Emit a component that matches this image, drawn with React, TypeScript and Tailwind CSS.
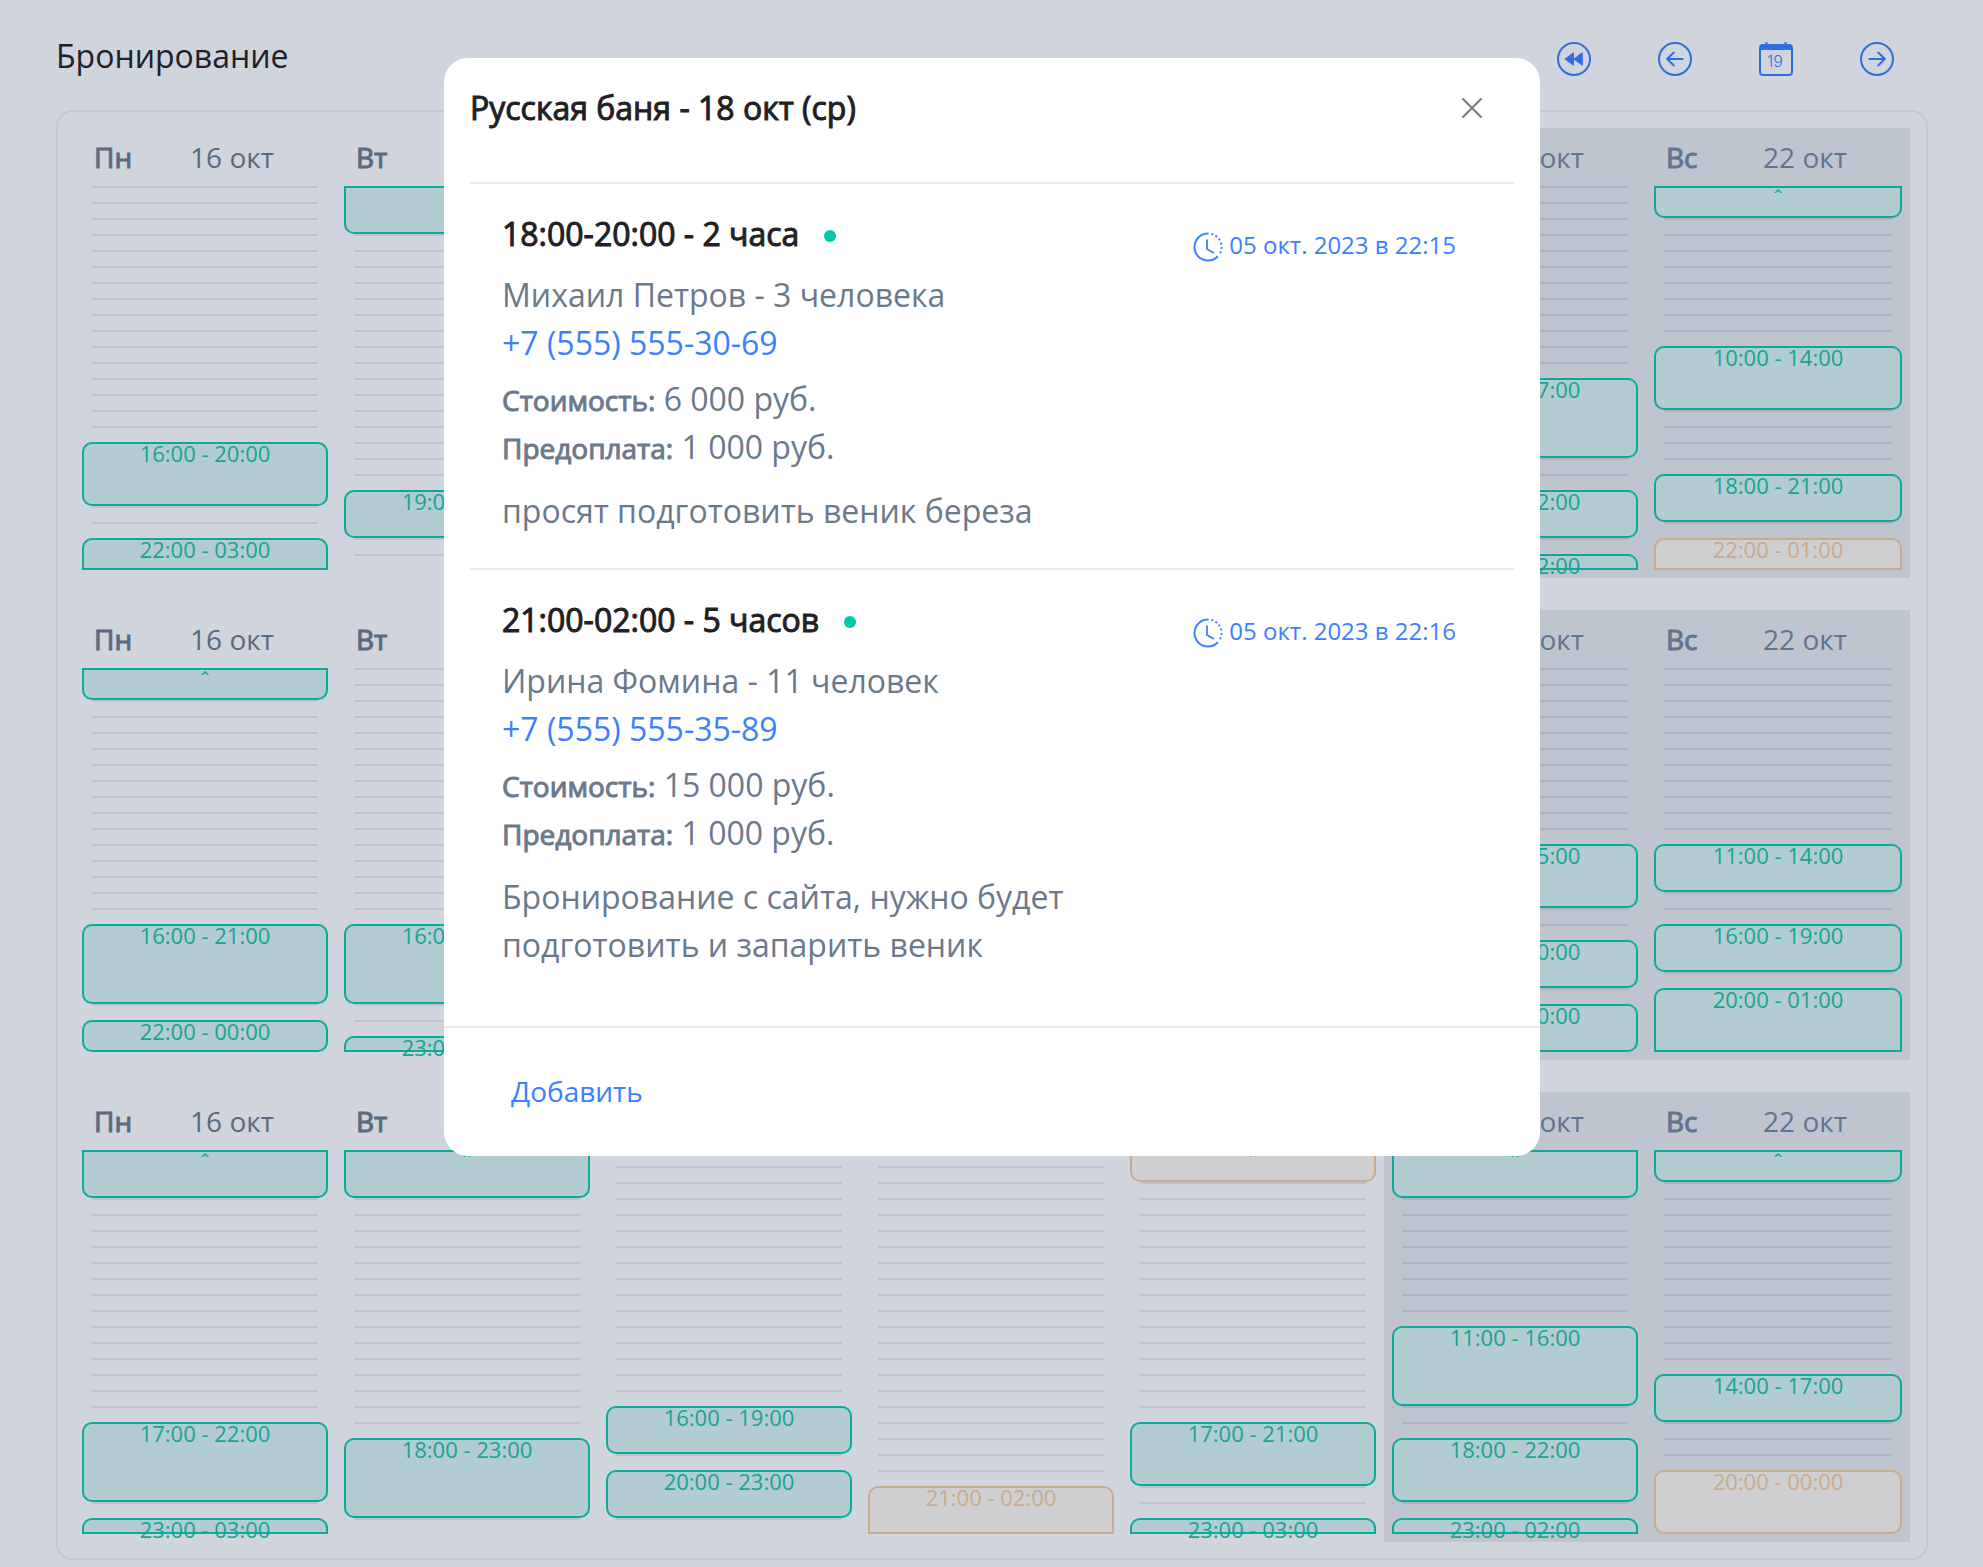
import React from "react";
import clsx from "clsx";

type Booking = { from: number; to: number; label: string; pending?: boolean };

const pad = (h: number) => `${String(h % 24).padStart(2, "0")}:00`;

/* A booking inside the day; `end` past 24 runs into the next morning. */
const b = (from: number, end: number, pending = false): Booking => ({
  from,
  to: end,
  label: `${pad(from)} - ${pad(end)}`,
  pending,
});

/* Tail of a booking that started the evening before. */
const tail = (to: number, pending = false): Booking => ({ from: -1, to, label: "ˆ", pending });

const days = [
  { name: "Пн", date: "16 окт" },
  { name: "Вт", date: "17 окт" },
  { name: "Ср", date: "18 окт" },
  { name: "Чт", date: "19 окт" },
  { name: "Пт", date: "20 окт" },
  { name: "Сб", date: "21 окт", weekend: true },
  { name: "Вс", date: "22 окт", weekend: true },
];

const weeks: Booking[][][] = [
  [
    [b(16, 20), b(22, 27)],
    [tail(3), b(19, 22)],
    [b(18, 20), b(21, 26)],
    [tail(2)],
    [],
    [b(12, 17), b(19, 22), b(23, 26)],
    [tail(2), b(10, 14), b(18, 21), b(22, 25, true)],
  ],
  [
    [tail(2), b(16, 21), b(22, 24)],
    [b(16, 21), b(23, 26)],
    [tail(2)],
    [],
    [],
    [b(11, 15), b(17, 20), b(21, 24)],
    [b(11, 14), b(16, 19), b(20, 25)],
  ],
  [
    [tail(3), b(17, 22), b(23, 27)],
    [tail(3), b(18, 23)],
    [b(16, 19), b(20, 23)],
    [b(21, 26, true)],
    [tail(2, true), b(17, 21), b(23, 27)],
    [tail(3), b(11, 16), b(18, 22), b(23, 26)],
    [tail(2), b(14, 17), b(20, 24, true)],
  ],
];

const hours = Array.from({ length: 24 }, (_, i) => i);

function RewindIcon() {
  return (
    <svg viewBox="0 0 34 34" className="size-[34px]" aria-hidden="true">
      <circle cx="17" cy="17" r="16" fill="none" stroke="currentColor" strokeWidth="2" />
      <path
        d="M16.5 10.8v12.4L8 17z M25.3 10.8v12.4L16.8 17z"
        fill="currentColor"
        stroke="currentColor"
        strokeWidth="1"
        strokeLinejoin="round"
      />
    </svg>
  );
}

function ArrowIcon({ right = false }: { right?: boolean }) {
  return (
    <svg viewBox="0 0 34 34" className="size-[34px]" aria-hidden="true">
      <g fill="none" stroke="currentColor" strokeWidth="2">
        <circle cx="17" cy="17" r="16" />
        <path
          d={right ? "M9.5 17h15.5M18.2 10.5l6.6 6.5-6.6 6.5" : "M24.5 17H9M15.8 10.5L9.2 17l6.6 6.5"}
          strokeLinecap="round"
          strokeLinejoin="round"
        />
      </g>
    </svg>
  );
}

function CalendarIcon() {
  return (
    <svg viewBox="0 0 34 34" className="size-[34px]" aria-hidden="true">
      <rect x="1" y="3" width="32" height="30" rx="3" fill="none" stroke="currentColor" strokeWidth="2" />
      <path d="M1 8V6a3 3 0 0 1 3-3h26a3 3 0 0 1 3 3v2z" fill="currentColor" />
      <path d="M7.5 0v4M26.5 0v4" stroke="currentColor" strokeWidth="2" />
      <text x="16" y="25" textAnchor="middle" fontSize="16" fill="currentColor" className="font-['Inter',sans-serif] font-light">
        19
      </text>
    </svg>
  );
}

function ClockIcon() {
  return (
    <svg viewBox="0 0 30 30" className="mt-1 size-[30px]" aria-hidden="true">
      <g fill="none" stroke="currentColor" strokeWidth="2">
        <path d="M15.6 1.5A13.5 13.5 0 1 0 24.8 24.3" />
        <path d="M18.4 1.9A13.5 13.5 0 0 1 26.6 22" strokeDasharray="2 2.4" />
        <path d="M14 7.5V17l6.8 4" strokeWidth="1.8" />
      </g>
    </svg>
  );
}

function Day({
  day,
  bookings,
}: {
  day: { name: string; date: string; weekend?: boolean };
  bookings: Booking[];
}) {
  return (
    <section
      className={clsx(
        "px-2 pb-2 text-[28px]",
        day.weekend ? "bg-[#bec5cf] text-[#5f7592]" : "text-[#596a80]",
      )}
    >
      <header className="flex h-[58px] items-center leading-[42px]">
        <span className="w-[54px] pl-3 [-webkit-text-stroke:1px]">{day.name}</span>
        <span className="flex-1 text-center">{day.date}</span>
      </header>
      <div className="grid grid-cols-1 grid-rows-[repeat(24,16px)]">
        {hours.map((h) => (
          <div
            key={h}
            className={clsx(
              "col-start-1 mx-[10px] border-t-2",
              day.weekend ? "border-[#aeb4c3]" : "border-[#bdc2cf]",
            )}
            style={{ gridRow: h + 1 }}
          />
        ))}
        {bookings.map((item) => (
          <button
            key={item.from}
            type="button"
            className={clsx(
              "col-start-1 flex items-start justify-center border-2 text-[22px] leading-[18px]",
              item.pending
                ? "border-[#c9aa8b] bg-[#cfced0] text-[#c9aa8b]"
                : "border-[#0bab99] bg-[#b3ccd1] text-[#15a593]",
              item.from >= 0 && "rounded-t-[10px]",
              item.to <= 24 && "rounded-b-[10px]",
            )}
            style={{ gridRow: `${Math.max(item.from, 0) + 1} / ${Math.min(item.to, 24) + 1}` }}
          >
            {item.label}
          </button>
        ))}
      </div>
    </section>
  );
}

type Details = {
  title: string;
  created: string;
  guest: string;
  phone: string;
  cost: string;
  prepaid: string;
  note: string;
};

const details: Details[] = [
  {
    title: "18:00-20:00 - 2 часа",
    created: "05 окт. 2023 в 22:15",
    guest: "Михаил Петров - 3 человека",
    phone: "+7 (555) 555-30-69",
    cost: "6 000 руб.",
    prepaid: "1 000 руб.",
    note: "просят подготовить веник береза",
  },
  {
    title: "21:00-02:00 - 5 часов",
    created: "05 окт. 2023 в 22:16",
    guest: "Ирина Фомина - 11 человек",
    phone: "+7 (555) 555-35-89",
    cost: "15 000 руб.",
    prepaid: "1 000 руб.",
    note: "Бронирование с сайта, нужно будет подготовить и запарить веник",
  },
];

function BookingDetails({ item }: { item: Details }) {
  return (
    <article className="flex items-start justify-between border-t-2 border-[#e9e9ee] px-8 pt-[26px] pb-[33px]">
      <div className="max-w-[600px]">
        <h3 className="mb-[13px] flex items-center text-[#1f2123] [-webkit-text-stroke:1px]">
          {item.title}
          <span className="mt-1 ml-[25px] size-3 rounded-full bg-[#00cba9]" />
        </h3>
        <p>{item.guest}</p>
        <a href={`tel:${item.phone.replace(/[^+\d]/g, "")}`} className="block text-[#3a80ff]">
          {item.phone}
        </a>
        <p className="mt-2">
          <span className="text-[28px] leading-none [-webkit-text-stroke:1px]">Стоимость:</span> {item.cost}
        </p>
        <p>
          <span className="text-[28px] leading-none [-webkit-text-stroke:1px]">Предоплата:</span> {item.prepaid}
        </p>
        <p className="mt-4">{item.note}</p>
      </div>
      <div className="mt-[17px] flex h-9 shrink-0 items-center gap-1.5 pr-[26px] text-2xl leading-9 text-[#3a80ff]">
        <ClockIcon />
        <span>{item.created}</span>
      </div>
    </article>
  );
}

export default function App() {
  return (
    <div className="min-h-screen bg-[#d0d4dd] pr-[55px] pb-[7px] pl-14 font-['Open_Sans',sans-serif]">
      <header className="flex h-[110px] items-start justify-between pt-8 pr-[34px]">
        <h1 className="text-[32px] leading-[48px] text-[#1c212b]">Бронирование</h1>
        <nav className="flex gap-[67px] pt-2.5 text-[#2f6edf]">
          <button type="button" aria-label="В начало">
            <RewindIcon />
          </button>
          <button type="button" aria-label="Назад">
            <ArrowIcon />
          </button>
          <button type="button" aria-label="Выбрать дату">
            <CalendarIcon />
          </button>
          <button type="button" aria-label="Вперёд">
            <ArrowIcon right />
          </button>
        </nav>
      </header>

      <main className="flex flex-col gap-8 rounded-2xl border-2 border-[#c3c8d6] p-4">
        {weeks.map((week, w) => (
          <div key={w} className="grid grid-cols-[repeat(6,131fr)_132fr]">
            {week.map((bookings, d) => (
              <Day key={d} day={days[d]} bookings={bookings} />
            ))}
          </div>
        ))}
      </main>

      <div className="fixed inset-0 flex items-start justify-center pt-[58px] pl-px">
        <div
          role="dialog"
          aria-modal="true"
          aria-labelledby="dialog-title"
          className="w-full max-w-[1096px] rounded-3xl bg-white text-[32px] leading-[48px] text-[#6a798b]"
        >
          <div className="flex h-[124px] items-start justify-between px-[26px] pt-[26px]">
            <h2 id="dialog-title" className="text-[#1f2123] [-webkit-text-stroke:1px]">
              Русская баня - 18 окт (ср)
            </h2>
            <button type="button" aria-label="Закрыть" className="mt-[14px] mr-8 text-[#7b7b7b]">
              <svg viewBox="0 0 20 20" className="size-5" aria-hidden="true">
                <path
                  d="M1 1l18 18M19 1L1 19"
                  fill="none"
                  stroke="currentColor"
                  strokeWidth="2"
                  strokeLinecap="round"
                />
              </svg>
            </button>
          </div>
          <div className="px-[26px] pb-6">
            {details.map((item) => (
              <BookingDetails key={item.title} item={item} />
            ))}
          </div>
          <footer className="border-t-2 border-[#e9e9ee] px-[67px] pt-[42px] pb-11">
            <button type="button" className="block text-[28px] leading-[42px] text-[#3a80ff]">
              Добавить
            </button>
          </footer>
        </div>
      </div>
    </div>
  );
}
